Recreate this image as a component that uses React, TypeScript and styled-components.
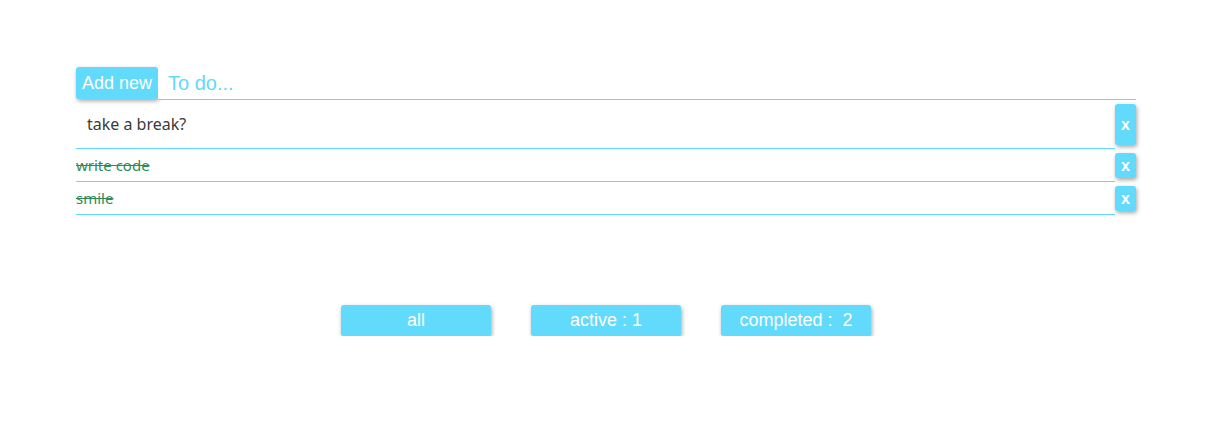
import React from "react";
import styled, { createGlobalStyle } from "styled-components";

const cyan = "#61dafb";
const shadow = "1px 2px 4px rgba(0, 0, 0, 0.35)";

const Global = createGlobalStyle`
  html, body { margin: 0; padding: 0; background: #fff; }
  body { font-family: "Liberation Sans", Arial, sans-serif; }
`;

const Container = styled.div`
  width: 1060px;
  margin: 67px 0 0 76px;
`;

const Header = styled.div`
  display: flex;
  align-items: flex-start;
`;

const AddButton = styled.button`
  height: 32px;
  width: 82px;
  padding: 0;
  border: none;
  border-radius: 3px;
  background: ${cyan};
  color: #fff;
  font-family: "Liberation Sans", Arial, sans-serif;
  font-size: 18px;
  box-shadow: ${shadow};
  cursor: pointer;
`;

const NewInput = styled.input`
  flex: 1;
  height: 32px;
  box-sizing: content-box;
  border: none;
  border-bottom: 1px solid ${cyan};
  outline: none;
  padding: 0 0 0 10px;
  font-family: "Liberation Sans", Arial, sans-serif;
  font-size: 20px;
  color: ${cyan};
  &::placeholder { color: ${cyan}; }
`;

const List = styled.div`
  display: flex;
  flex-direction: column;
`;

const Row = styled.div`
  display: flex;
  align-items: stretch;
`;

const ItemBox = styled.div<{ $tall?: boolean }>`
  flex: 1;
  height: ${(p) => (p.$tall ? 48 : 32)}px;
  border-bottom: 1px solid ${cyan};
  display: flex;
  align-items: center;
  padding-left: ${(p) => (p.$tall ? 11 : 0)}px;
`;

const ItemText = styled.span<{ $done?: boolean; $tall?: boolean }>`
  font-family: "Noto Sans", "Open Sans", sans-serif;
  font-size: ${(p) => (p.$tall ? 16 : 15)}px;
  color: ${(p) => (p.$done ? "#2e8b57" : "#3a3a3a")};
  text-decoration: ${(p) => (p.$done ? "line-through" : "none")};
`;

const RemoveButton = styled.button`
  width: 21px;
  margin: 4px 0;
  padding: 0;
  border: none;
  border-radius: 3px;
  background: ${cyan};
  color: #fff;
  font-family: "Liberation Sans", Arial, sans-serif;
  font-weight: bold;
  font-size: 16px;
  box-shadow: ${shadow};
  cursor: pointer;
`;

const Filters = styled.div`
  display: flex;
  justify-content: center;
  gap: 40px;
  margin-top: 90px;
`;

const FilterButton = styled.button`
  width: 150px;
  height: 31px;
  padding: 0;
  border: none;
  border-radius: 3px;
  background: ${cyan};
  color: #fff;
  font-family: "Liberation Sans", Arial, sans-serif;
  font-size: 18px;
  box-shadow: ${shadow};
  cursor: pointer;
`;

const todos = [
  { text: "take a break?", done: false },
  { text: "write code", done: true },
  { text: "smile", done: true },
];

export default function App() {
  const active = todos.filter((t) => !t.done).length;
  const completed = todos.length - active;
  return (
    <>
      <Global />
      <Container>
        <Header>
          <AddButton>Add new</AddButton>
          <NewInput placeholder="To do..." />
        </Header>
        <List>
          {todos.map((t, i) => (
            <Row key={i}>
              <ItemBox $tall={!t.done}>
                <ItemText $done={t.done} $tall={!t.done}>
                  {t.text}
                </ItemText>
              </ItemBox>
              <RemoveButton>x</RemoveButton>
            </Row>
          ))}
        </List>
        <Filters>
          <FilterButton>all</FilterButton>
          <FilterButton>active : {active}</FilterButton>
          <FilterButton>completed :&nbsp; {completed}</FilterButton>
        </Filters>
      </Container>
    </>
  );
}
